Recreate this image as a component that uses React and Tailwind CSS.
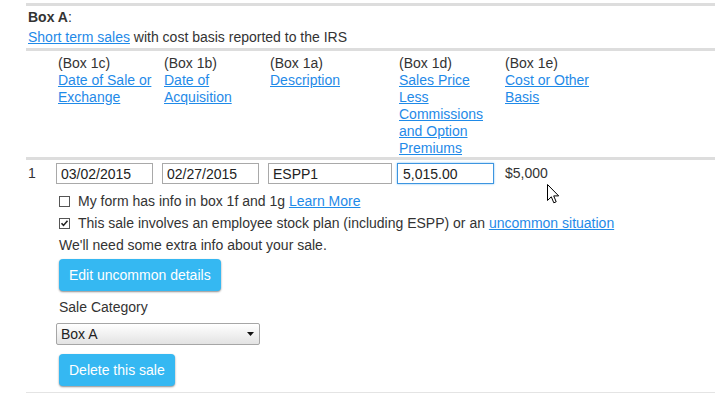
import React from 'react';

const linkCls = 'text-[#1f8ae8] underline underline-offset-[1px]';

function Checkbox({ checked }) {
  return (
    <span className="flex h-[11px] w-[11px] shrink-0 items-center justify-center border border-[#555] bg-white">
      {checked && (
        <svg width="9" height="9" viewBox="0 0 9 9">
          <path d="M1.5 4.2 L3.5 6.4 L7.5 1.8" fill="none" stroke="#222" strokeWidth="1.6" />
        </svg>
      )}
    </span>
  );
}

function BlueButton({ children }) {
  return (
    <button
      type="button"
      className="h-[32px] rounded-[4px] bg-[#35b8f2] px-[10px] text-[14px] text-white shadow-[0_1px_2px_rgba(0,0,0,0.45)]"
    >
      {children}
    </button>
  );
}

export default function App() {
  const columns = [
    { box: '(Box 1c)', label: 'Date of Sale or Exchange' },
    { box: '(Box 1b)', label: 'Date of Acquisition' },
    { box: '(Box 1a)', label: 'Description' },
    { box: '(Box 1d)', label: 'Sales Price Less Commissions and Option Premiums' },
    { box: '(Box 1e)', label: 'Cost or Other Basis' },
  ];

  const inputCls =
    'h-[21px] border border-[#a9a9a9] bg-white pl-[4px] text-[14px] text-[#222] outline-none';

  return (
    <div className="relative h-[393px] w-[715px] overflow-hidden bg-white pl-[26px] pt-[3px] font-['Liberation_Sans',Arial,sans-serif] text-[14px] leading-[17px] text-[#333]">
      <div className="h-[3px] bg-[#dddddd]" />

      <div className="pl-[2px] pt-[3px]">
        <div>
          <span className="font-bold">Box A</span>:
        </div>
        <div className="mt-[3px]">
          <a href="#" className={linkCls}>Short term sales</a> with cost basis reported to the IRS
        </div>
      </div>

      <div className="mt-[2px] h-[3px] bg-[#dddddd]" />

      {/* column headers */}
      <div className="grid grid-cols-[28px_106px_106px_129px_106px_106px_1fr] pt-[4px] pl-[2px]">
        <div />
        {columns.map((c) => (
          <div key={c.box} className="pl-[2px] pr-[8px]">
            <div>{c.box}</div>
            <a href="#" className={linkCls}>{c.label}</a>
          </div>
        ))}
        <div />
      </div>

      <div className="h-[3px] bg-[#dddddd]" />

      {/* sale row */}
      <div className="pl-[2px] pt-[3px]">
        <div className="grid grid-cols-[28px_106px_106px_129px_106px_1fr] items-center">
          <div>1</div>
          <div>
            <input className={`${inputCls} w-[97px]`} defaultValue="03/02/2015" />
          </div>
          <div>
            <input className={`${inputCls} w-[97px]`} defaultValue="02/27/2015" />
          </div>
          <div>
            <input className={`${inputCls} w-[124px]`} defaultValue="ESPP1" />
          </div>
          <div>
            <input
              className="h-[21px] w-[97px] border border-[#3d95e0] bg-white pl-[5px] text-[14px] text-[#222] shadow-[0_0_2px_#7fc0f3] outline-none"
              defaultValue="5,015.00"
            />
          </div>
          <div className="pl-[2px]">$5,000</div>
        </div>

        <div className="pl-[31px] pt-[6px]">
          <div className="flex h-[22px] items-center gap-[8px]">
            <Checkbox />
            <span>
              My form has info in box 1f and 1g <a href="#" className={linkCls}>Learn More</a>
            </span>
          </div>
          <div className="flex h-[22px] items-center gap-[8px]">
            <Checkbox checked />
            <span>
              This sale involves an employee stock plan (including ESPP) or an{' '}
              <a href="#" className={linkCls}>uncommon situation</a>
            </span>
          </div>
          <div className="flex h-[22px] items-center">We'll need some extra info about your sale.</div>

          <div className="mt-[3px]">
            <BlueButton>Edit uncommon details</BlueButton>
          </div>

          <div className="mt-[5px] flex h-[22px] items-center">Sale Category</div>

          <div className="relative ml-[-3px] mt-[5px] w-[204px]">
            <select
              defaultValue="a"
              className="h-[22px] w-full appearance-none rounded-[2px] border border-[#a6a6a6] bg-gradient-to-b from-white to-[#e3e3e3] pl-[4px] text-[14px] text-[#222] outline-none"
            >
              <option value="a">Box A</option>
              <option value="b">Box B</option>
              <option value="c">Box C</option>
            </select>
            <svg className="pointer-events-none absolute right-[6px] top-[9px]" width="7" height="4" viewBox="0 0 7 4">
              <path d="M0 0 L7 0 L3.5 4 Z" fill="#111" />
            </svg>
          </div>

          <div className="mt-[9px]">
            <BlueButton>Delete this sale</BlueButton>
          </div>
        </div>
      </div>

      <div className="mt-[6px] h-[2px] bg-[#e4e4e4]" />

      {/* mouse pointer */}
      <svg className="pointer-events-none absolute left-[547px] top-[184px]" width="13" height="21" viewBox="0 0 13 21">
        <path
          d="M0.5 0.5 L0.5 16.5 L4.3 12.8 L6.8 18.8 L9.2 17.8 L6.7 11.9 L11.7 11.9 Z"
          fill="#fff"
          stroke="#000"
          strokeWidth="1"
          strokeLinejoin="miter"
        />
      </svg>
    </div>
  );
}
